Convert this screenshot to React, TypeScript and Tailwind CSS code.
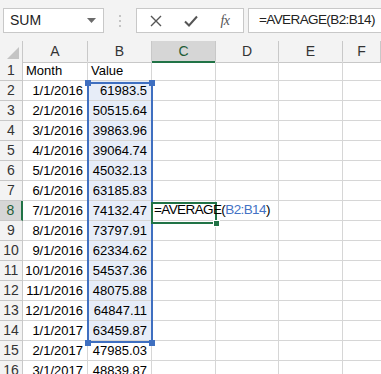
import React from "react";

const rows: [string, string][] = [
  ["Month", "Value"],
  ["1/1/2016", "61983.5"],
  ["2/1/2016", "50515.64"],
  ["3/1/2016", "39863.96"],
  ["4/1/2016", "39064.74"],
  ["5/1/2016", "45032.13"],
  ["6/1/2016", "63185.83"],
  ["7/1/2016", "74132.47"],
  ["8/1/2016", "73797.91"],
  ["9/1/2016", "62334.62"],
  ["10/1/2016", "54537.36"],
  ["11/1/2016", "48075.88"],
  ["12/1/2016", "64847.11"],
  ["1/1/2017", "63459.87"],
  ["2/1/2017", "47985.03"],
  ["3/1/2017", "48839.87"],
];

const cols = ["A", "B", "C", "D", "E", "F"];

function Handle({ cls }: { cls: string }) {
  return <div className={`absolute w-[6px] h-[6px] bg-[#3f6fc0] ${cls}`} />;
}

export default function App() {
  return (
    <div
      className="w-[381px] h-[374px] overflow-hidden bg-white text-[13px] text-black"
      style={{ fontFamily: '"Liberation Sans", Arial, sans-serif' }}
    >
      {/* Toolbar */}
      <div className="h-[41px] bg-[#f3f3f3] flex items-start pt-[8px]">
        <div className="ml-[3px] w-[101px] h-[25px] bg-white border border-[#c8c8c8] flex items-center pl-[6px] pr-[7px]">
          <span className="flex-1 text-[14px] text-[#222]">SUM</span>
          <svg width="9" height="5" viewBox="0 0 9 5">
            <path d="M0 0 L9 0 L4.5 5 Z" fill="#6b6b6b" />
          </svg>
        </div>
        <div className="w-[32px] h-[25px] flex flex-col items-center justify-center gap-[3px]">
          <div className="w-[2px] h-[2px] bg-[#b5b5b5] rounded-full" />
          <div className="w-[2px] h-[2px] bg-[#b5b5b5] rounded-full" />
          <div className="w-[2px] h-[2px] bg-[#b5b5b5] rounded-full" />
        </div>
        <div className="w-[108px] h-[25px] bg-white border border-[#c8c8c8] flex items-center">
          <div className="w-[38px] flex justify-center">
            <svg width="12" height="12" viewBox="0 0 12 12">
              <path d="M1 1 L11 11 M11 1 L1 11" stroke="#555" strokeWidth="1.4" fill="none" />
            </svg>
          </div>
          <div className="w-[32px] flex justify-center">
            <svg width="14" height="12" viewBox="0 0 14 12">
              <path d="M1 6.5 L5 10.5 L13 1.5" stroke="#555" strokeWidth="2" fill="none" />
            </svg>
          </div>
          <div
            className="w-[36px] flex justify-center italic text-[14px] text-[#555] tracking-[-0.5px]"
            style={{ fontFamily: '"Liberation Serif", "Times New Roman", serif' }}
          >
            fx
          </div>
        </div>
        <div className="ml-[4px] flex-1 h-[25px] bg-white border border-[#c8c8c8] border-r-0 flex items-center pl-[10px] text-[13.5px] tracking-[-0.6px] text-[#222]">
          =AVERAGE(B2:B14)
        </div>
      </div>

      {/* Sheet */}
      <div className="relative">
        <div className="grid grid-cols-[23px_65px_64px_64px_63px_64px_1fr] auto-rows-[20px]">
          {/* Header row */}
          <div className="h-[22px] bg-[#f3f3f3] border-r border-b border-[#c8c8c8] flex items-end justify-end pr-[3px] pb-[3px]">
            <svg width="12" height="12" viewBox="0 0 12 12">
              <path d="M12 0 L12 12 L0 12 Z" fill="#c4c4c4" />
            </svg>
          </div>
          {cols.map((c) => (
            <div
              key={c}
              className={
                c === "C"
                  ? "h-[22px] bg-[#d6d6d6] border-r border-[#c8c8c8] border-b-2 border-b-[#217346] flex items-center justify-center text-[14px] text-[#1e5c38]"
                  : "h-[22px] bg-[#f3f3f3] border-r border-b border-[#c8c8c8] flex items-center justify-center text-[14px] text-[#333]"
              }
            >
              {c}
            </div>
          ))}

          {rows.map(([a, b], i) => {
            const r = i + 1;
            const numeric = r > 1;
            const inSel = r >= 2 && r <= 14;
            return (
              <React.Fragment key={r}>
                <div
                  className={
                    r === 8
                      ? "bg-[#d6d6d6] border-r-2 border-r-[#217346] border-b border-[#c8c8c8] flex items-center justify-center text-[14px] text-[#1e5c38]"
                      : "bg-[#f3f3f3] border-r border-b border-[#c8c8c8] flex items-center justify-center text-[14px] text-[#333]"
                  }
                >
                  {r}
                </div>
                <div
                  className={`border-r border-b border-[#d6d6d6] flex items-center whitespace-nowrap ${
                    numeric ? "justify-end pr-[4px]" : "pl-[3px]"
                  }`}
                >
                  {a}
                </div>
                <div
                  className={`border-r border-b border-[#d6d6d6] flex items-center whitespace-nowrap ${
                    numeric ? "justify-end pr-[4px]" : "pl-[3px]"
                  } ${inSel ? "bg-[#e7edf8]" : ""}`}
                >
                  {b}
                </div>
                <div className="border-r border-b border-[#d6d6d6] flex items-center whitespace-nowrap overflow-visible">
                  {r === 8 ? (
                    <span className="relative z-10 pl-[2px] text-[13.5px] tracking-[-0.6px]">
                      =AVERAGE(<span className="text-[#4472c4]">B2:B14</span>)
                    </span>
                  ) : null}
                </div>
                <div className="border-r border-b border-[#d6d6d6]" />
                <div className="border-r border-b border-[#d6d6d6]" />
                <div className="border-b border-[#d6d6d6]" />
              </React.Fragment>
            );
          })}
        </div>

        {/* Reference highlight B2:B14 */}
        <div className="absolute left-[87px] top-[41px] w-[66px] h-[261px] border-2 border-[#3f6fc0] pointer-events-none" />
        <Handle cls="left-[85px] top-[39px]" />
        <Handle cls="left-[149px] top-[39px]" />
        <Handle cls="left-[85px] top-[299px]" />
        <Handle cls="left-[149px] top-[299px]" />

        {/* Active cell C8 */}
        <div className="absolute left-[151px] top-[161px] w-[66px] h-[22px] border-2 border-[#217346] pointer-events-none" />
        <div className="absolute left-[213px] top-[179px] w-[7px] h-[7px] bg-[#217346] border border-white" />
      </div>
    </div>
  );
}
